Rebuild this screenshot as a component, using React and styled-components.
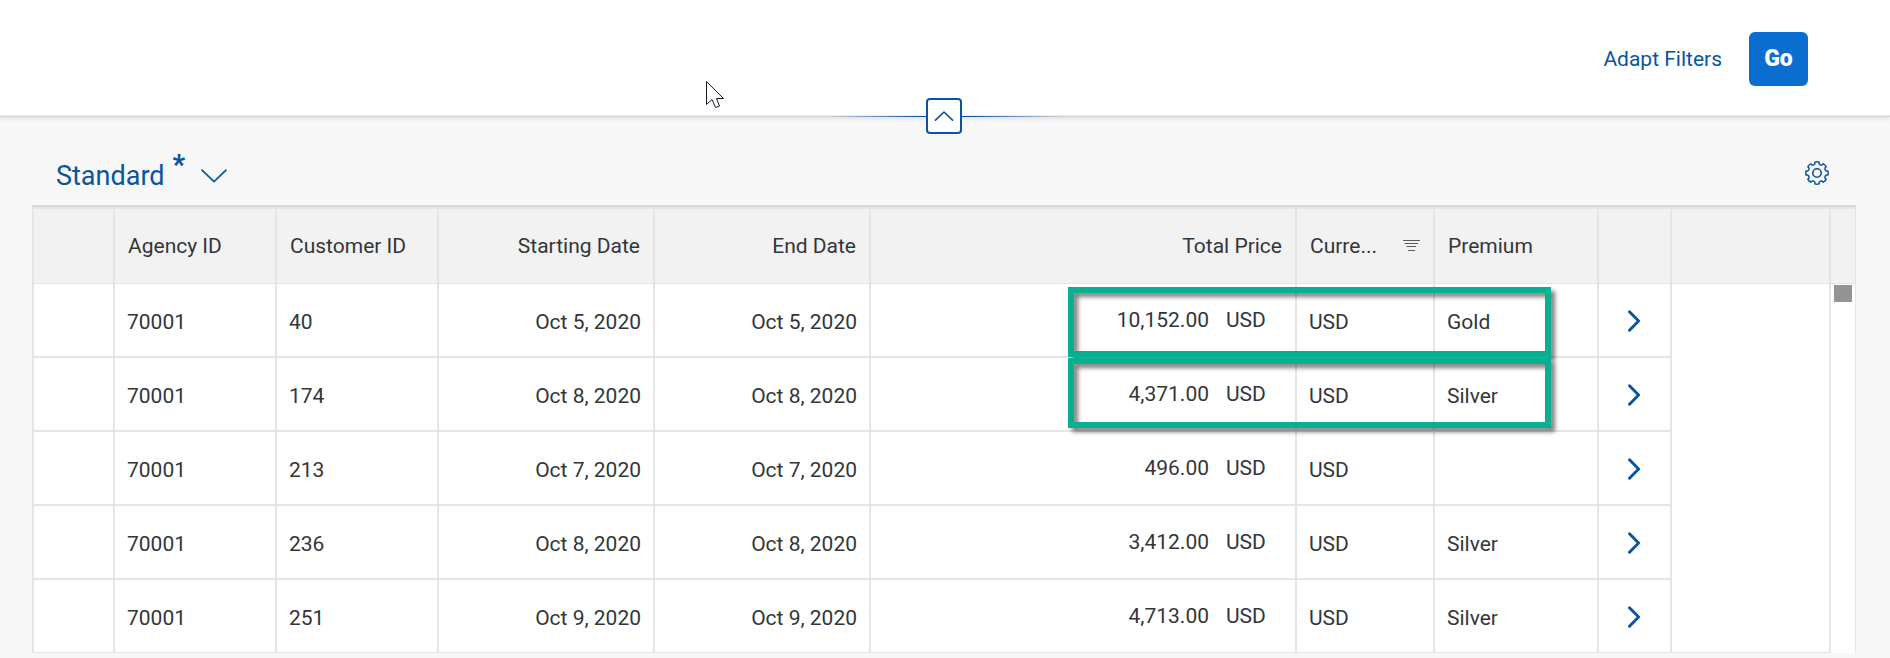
import React from "react";
import styled, { createGlobalStyle } from "styled-components";

const Global = createGlobalStyle`
  *, *::before, *::after { box-sizing: border-box; }
  body {
    margin: 0;
    background: #f7f7f7;
    color: #32363a;
    font-family: Roboto, "Liberation Sans", sans-serif;
    font-size: 21px;
    line-height: 24px;
  }
  button {
    font: inherit;
    border: 0;
    padding: 0;
    background: none;
    color: #0854a0;
    cursor: pointer;
  }
`;

const FilterBar = styled.header`
  position: relative;
  display: flex;
  justify-content: flex-end;
  align-items: center;
  gap: 27px;
  height: 117px;
  padding: 2px 82px 0 32px;
  background: #fff;
  border-bottom: 1px solid #d4d4d4;
  box-shadow: 0 2px 4px rgba(0, 0, 0, 0.09), inset 0 -1px 0 #ececec;
`;

const LinkButton = styled.button`
  height: 54px;
`;

const GoButton = styled.button`
  width: 59px;
  height: 54px;
  border-radius: 6px;
  background: #0a6ed1;
  color: #fff;
  font-size: 23px;
  font-weight: 900;
`;

const CollapseLine = styled.div`
  position: absolute;
  left: 50%;
  bottom: -1px;
  width: 236px;
  height: 1px;
  transform: translateX(-50%);
  background: linear-gradient(90deg, transparent, #0854a0 40%, #0854a0 60%, transparent);
`;

const CollapseButton = styled.button`
  position: absolute;
  left: 50%;
  bottom: -18px;
  display: flex;
  align-items: center;
  justify-content: center;
  width: 36px;
  height: 36px;
  margin-left: -19px;
  border: 2px solid #0854a0;
  border-radius: 4px;
  background: #fff;
`;

const Pointer = styled.svg`
  position: absolute;
  left: 706px;
  top: 80px;
`;

const Content = styled.main`
  padding: 0 34px 5px 32px;
`;

const Toolbar = styled.div`
  display: flex;
  align-items: center;
  justify-content: space-between;
  height: 88px;
  padding: 0 26px 0 24px;
`;

const VariantButton = styled.button`
  display: flex;
  align-items: center;
  margin-top: 30px;
  font-size: 27px;
  line-height: 32px;
`;

const Modified = styled.span`
  align-self: flex-start;
  margin: -7px 16px 0 8px;
  font-size: 27px;
  line-height: 24px;
  font-weight: 900;
`;

const IconButton = styled.button`
  display: flex;
  margin-top: 24px;
`;

const TableFrame = styled.div`
  display: flex;
  border-top: 2px solid #d9d9d9;
`;

const Table = styled.table`
  flex: 1;
  width: 100%;
  min-width: 0;
  table-layout: fixed;
  border-collapse: separate;
  border-spacing: 0;
  border-left: 2px solid #e5e5e5;
`;

const HeadCell = styled.th`
  height: 77px;
  padding: 0 13px;
  border-top: 2px solid #e5e5e5;
  border-right: 2px solid #e5e5e5;
  border-bottom: 1px solid #e5e5e5;
  background: #f2f2f2;
  font-weight: 400;
  text-align: ${(p) => (p.$end ? "right" : "left")};
`;

const HeadFlex = styled.div`
  display: flex;
  align-items: center;
  justify-content: space-between;
`;

const Cell = styled.td`
  position: relative;
  height: 74px;
  padding: 4px 12px 0 12px;
  border-right: 2px solid #e5e5e5;
  border-bottom: 2px solid #e5e5e5;
  background: #fff;
  text-align: ${(p) => (p.$end ? "right" : "left")};

  tr:last-child > & {
    height: 73px;
    border-bottom-width: 1px;
  }
`;

const PriceCell = styled(Cell)`
  padding: 0 27px 0 12px;
`;

const Price = styled.div`
  display: flex;
  justify-content: flex-end;
  gap: 17px;
`;

const Unit = styled.span`
  width: 42px;
  text-align: left;
`;

const ActionCell = styled(Cell)`
  padding: 0;
`;

const FillerCell = styled(Cell)`
  border-bottom: 1px solid #e5e5e5;
`;

const NavButton = styled.button`
  display: flex;
  align-items: center;
  justify-content: center;
  width: 100%;
  height: 44px;
  padding: 1px 1px 0 0;
`;

const Scrollbar = styled.div`
  display: flex;
  flex-direction: column;
  width: 25px;
  border-right: 1px solid #e5e5e5;
  background: #fff;
`;

const ScrollHead = styled.div`
  height: 77px;
  border-top: 2px solid #e5e5e5;
  border-bottom: 1px solid #e5e5e5;
  background: #f2f2f2;
`;

const ScrollThumb = styled.div`
  width: 18px;
  height: 17px;
  margin: 1px 0 0 3px;
  background: #949494;
`;

const Highlights = styled.div`
  position: absolute;
  z-index: 1;
  top: 3px;
  left: 197px;
  display: flex;
  flex-direction: column;
  gap: 1px;
  width: 483px;
  pointer-events: none;
`;

const Highlight = styled.div`
  height: 70px;
  border: 6px solid #07b091;
  filter: drop-shadow(4px 4px 2px rgba(0, 0, 0, 0.5));
`;

const rows = [
  { agency: "70001", customer: "40", start: "Oct 5, 2020", end: "Oct 5, 2020", price: "10,152.00", currency: "USD", premium: "Gold" },
  { agency: "70001", customer: "174", start: "Oct 8, 2020", end: "Oct 8, 2020", price: "4,371.00", currency: "USD", premium: "Silver" },
  { agency: "70001", customer: "213", start: "Oct 7, 2020", end: "Oct 7, 2020", price: "496.00", currency: "USD", premium: "" },
  { agency: "70001", customer: "236", start: "Oct 8, 2020", end: "Oct 8, 2020", price: "3,412.00", currency: "USD", premium: "Silver" },
  { agency: "70001", customer: "251", start: "Oct 9, 2020", end: "Oct 9, 2020", price: "4,713.00", currency: "USD", premium: "Silver" },
];

const columnWidths = [81, 162, 162, 216, 216, 426, 138, 164, 73];

/* Outline of an eight-toothed cog centred on the origin. */
const cogPath = (() => {
  const at = (r, deg) => {
    const a = (deg * Math.PI) / 180;
    return `${(r * Math.sin(a)).toFixed(2)} ${(-r * Math.cos(a)).toFixed(2)}`;
  };
  let d = "";
  for (let i = 0; i < 8; i += 1) {
    const c = i * 45;
    d += `${i === 0 ? "M" : "L"}${at(9.4, c - 13)}L${at(11.1, c - 11)}Q${at(11.6, c)} ${at(11.1, c + 11)}L${at(9.4, c + 13)}Q${at(8.2, c + 22.5)} ${at(9.4, c + 32)}`;
  }
  return `${d}Z`;
})();

const stroke = { fill: "none", stroke: "#0854a0", strokeLinecap: "round", strokeLinejoin: "round" };

const ChevronUp = () => (
  <svg width="20" height="12" viewBox="0 0 20 12" aria-hidden="true">
    <path d="M1.5 10.2 10 2l8.5 8.2" {...stroke} strokeWidth="1.6" />
  </svg>
);

const ChevronDown = () => (
  <svg width="26" height="14" viewBox="0 0 26 14" aria-hidden="true">
    <path d="M1 1.2 13 12.6 25 1.2" {...stroke} strokeWidth="1.7" />
  </svg>
);

const ChevronRight = () => (
  <svg width="14" height="22" viewBox="0 0 14 22" aria-hidden="true">
    <path d="M2.5 1.8 11.600 11 2.5 20.2" {...stroke} strokeWidth="2.9" />
  </svg>
);

const Cog = () => (
  <svg width="26" height="26" viewBox="-13 -13 26 26" aria-hidden="true">
    <path d={cogPath} {...stroke} strokeWidth="1.5" />
    <circle r="4.2" {...stroke} strokeWidth="1.6" />
  </svg>
);

const FilterLines = () => (
  <svg width="17" height="12" viewBox="0 0 17 12" role="img" aria-label="Filtered">
    <path d="M0 .5H17M1.500 3.500H15M3.500 6.500H13M5 10.500H12" fill="none" stroke="#5a5e62" strokeWidth="1" />
  </svg>
);

export default function App() {
  return (
    <>
      <Global />
      <FilterBar>
        <LinkButton type="button">Adapt Filters</LinkButton>
        <GoButton type="button">Go</GoButton>
        <CollapseLine />
        <CollapseButton type="button" aria-label="Collapse header">
          <ChevronUp />
        </CollapseButton>
        <Pointer width="20" height="30" viewBox="0 0 20 30" aria-hidden="true">
          <path d="M.5 1.5V24.5L6 19.5 9.500 27.500 13.500 26 10.500 18.500H17.500Z" fill="#fff" stroke="#1b1b26" strokeWidth="1" />
        </Pointer>
      </FilterBar>
      <Content>
        <Toolbar>
          <VariantButton type="button">
            Standard
            <Modified>*</Modified>
            <ChevronDown />
          </VariantButton>
          <IconButton type="button" aria-label="Settings">
            <Cog />
          </IconButton>
        </Toolbar>
        <TableFrame>
          <Table>
            <colgroup>
              {columnWidths.map((width, i) => (
                <col key={i} width={width} />
              ))}
              <col />
            </colgroup>
            <thead>
              <tr>
                <HeadCell />
                <HeadCell>Agency ID</HeadCell>
                <HeadCell>Customer ID</HeadCell>
                <HeadCell $end>Starting Date</HeadCell>
                <HeadCell $end>End Date</HeadCell>
                <HeadCell $end>Total Price</HeadCell>
                <HeadCell>
                  <HeadFlex>
                    Curre...
                    <FilterLines />
                  </HeadFlex>
                </HeadCell>
                <HeadCell>Premium</HeadCell>
                <HeadCell />
                <HeadCell />
              </tr>
            </thead>
            <tbody>
              {rows.map((row, i) => (
                <tr key={row.customer}>
                  <Cell />
                  <Cell>{row.agency}</Cell>
                  <Cell>{row.customer}</Cell>
                  <Cell $end>{row.start}</Cell>
                  <Cell $end>{row.end}</Cell>
                  <PriceCell>
                    <Price>
                      <span>{row.price}</span>
                      <Unit>{row.currency}</Unit>
                    </Price>
                    {i === 0 && (
                      <Highlights>
                        <Highlight />
                        <Highlight />
                      </Highlights>
                    )}
                  </PriceCell>
                  <Cell>{row.currency}</Cell>
                  <Cell>{row.premium}</Cell>
                  <ActionCell>
                    <NavButton type="button" aria-label={`Open customer ${row.customer}`}>
                      <ChevronRight />
                    </NavButton>
                  </ActionCell>
                  {i === 0 && <FillerCell rowSpan={rows.length} />}
                </tr>
              ))}
            </tbody>
          </Table>
          <Scrollbar>
            <ScrollHead />
            <ScrollThumb />
          </Scrollbar>
        </TableFrame>
      </Content>
    </>
  );
}
